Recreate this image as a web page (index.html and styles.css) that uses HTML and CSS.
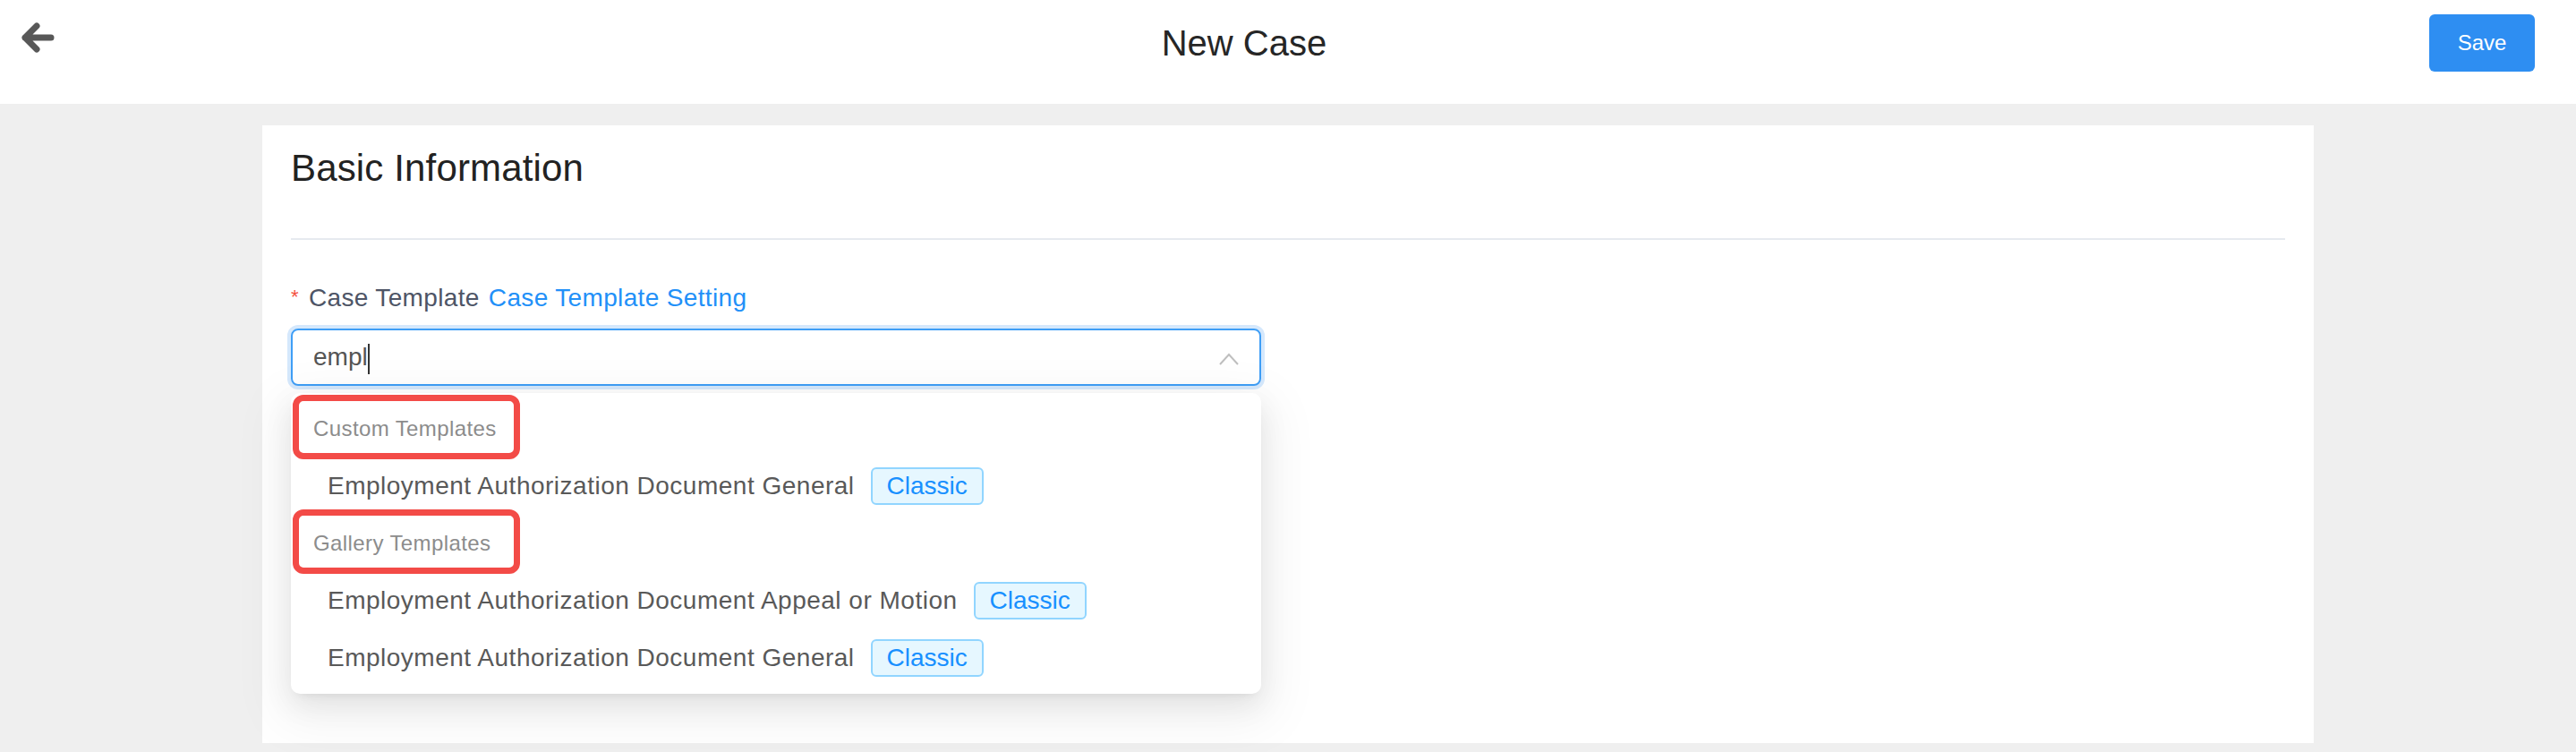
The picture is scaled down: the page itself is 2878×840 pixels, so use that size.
FILE: index.html
```html
<!DOCTYPE html>
<html lang="en">
  <head>
    <meta charset="UTF-8" />
    <meta name="viewport" content="width=device-width, initial-scale=1.0" />
    <title>New Case</title>
    <link rel="stylesheet" href="styles.css">
  </head>
  <body>
    <header class="topbar">
      <a class="back" href="#">
        <svg width="37" height="34" viewBox="0 0 37 34">
          <path d="M17 4 L4 17 L17 30 M4 17 H33" fill="none" stroke="#585858" stroke-width="7" stroke-linecap="round" stroke-linejoin="round" />
        </svg>
      </a>
      <h1 class="page-title">New Case</h1>
      <button class="btn-save">Save</button>
    </header>

    <main class="content">
      <section class="card">
        <h2 class="card-title">Basic Information</h2>
        <div class="divider"></div>

        <div class="form-item">
          <label class="form-label">
            <span class="required">*</span>Case Template <a class="link" href="#">Case Template Setting</a>
          </label>

          <div class="select">
            <div class="select-input">
              <span class="select-value">empl</span><span class="caret"></span>
              <svg class="chevron" width="22" height="14" viewBox="0 0 22 14">
                <path d="M1 13 L11 2 L21 13" fill="none" stroke="#bfbfbf" stroke-width="2" />
              </svg>
            </div>

            <div class="dropdown">
              <div class="group-title">Custom Templates<span class="mark"></span></div>
              <div class="option">
                Employment Authorization Document General<span class="tag">Classic</span>
              </div>
              <div class="group-title">Gallery Templates<span class="mark"></span></div>
              <div class="option">
                Employment Authorization Document Appeal or Motion<span class="tag">Classic</span>
              </div>
              <div class="option">
                Employment Authorization Document General<span class="tag">Classic</span>
              </div>
            </div>
          </div>
        </div>
      </section>
    </main>
  </body>
</html>
```

FILE: styles.css
```css
* {
  box-sizing: border-box;
}
html,
body {
  margin: 0;
  height: 100%;
}
body {
  display: flex;
  flex-direction: column;
  background-color: #efefef;
  font-family: "Liberation Sans", Arial, sans-serif;
  color: #262626;
}

/* top bar */
.topbar {
  display: flex;
  align-items: flex-start;
  height: 116px;
  padding: 16px 46px 0 24px;
  background-color: #fff;
}
.back {
  display: block;
  width: 42px;
  margin-top: 9px;
}
.back svg {
  display: block;
}
.page-title {
  flex: 1;
  margin: 8px 0 0;
  font-size: 40px;
  font-weight: normal;
  line-height: 48px;
  text-align: center;
  color: #262626;
}
.btn-save {
  width: 118px;
  height: 64px;
  border: none;
  border-radius: 6px;
  background-color: #2e8ef2;
  color: #fff;
  font-family: inherit;
  font-size: 24px;
  cursor: pointer;
}

/* page body */
.content {
  flex: 1;
  display: flex;
  padding: 24px 0 10px;
}
.card {
  width: 2292px;
  margin: 0 auto;
  padding: 16px 32px;
  background-color: #fff;
}
.card-title {
  margin: 0;
  font-size: 42px;
  font-weight: normal;
  line-height: 64px;
  letter-spacing: 0.15px;
  color: #222;
}
.divider {
  height: 2px;
  margin-top: 46px;
  background-color: #e6eaef;
}

/* form */
.form-item {
  margin-top: 42px;
  width: 1084px;
}
.form-label {
  display: block;
  font-size: 28px;
  line-height: 44px;
  letter-spacing: 0.35px;
  color: #4e5566;
}
.required {
  display: inline-block;
  margin-right: 11px;
  font-size: 22px;
  color: #f4503f;
  vertical-align: 3px;
}
.link {
  margin-left: 2px;
  color: #2290f8;
  text-decoration: none;
}

.select {
  position: relative;
  margin-top: 12px;
}
.select-input {
  position: relative;
  display: flex;
  align-items: center;
  height: 64px;
  padding: 0 23px;
  border: 2px solid #3f9ef6;
  border-radius: 8px;
  box-shadow: 0 0 0 4px #d5e8fc;
  font-size: 28px;
  color: #555;
}
.caret {
  width: 2px;
  height: 34px;
  margin-top: 4px;
  background-color: #333;
}
.chevron {
  position: absolute;
  right: 23px;
  top: 25px;
}

/* options popup */
.dropdown {
  position: absolute;
  top: calc(100% + 8px);
  left: 0;
  right: 0;
  padding: 8px 0;
  background-color: #fff;
  border-radius: 10px;
  box-shadow: 0 6px 12px -8px rgba(0, 0, 0, 0.12),
    0 12px 32px 0 rgba(0, 0, 0, 0.08), 0 18px 56px 16px rgba(0, 0, 0, 0.05);
}
.group-title {
  position: relative;
  display: flex;
  align-items: center;
  height: 64px;
  padding-left: 25px;
  font-size: 24px;
  letter-spacing: 0.4px;
  color: #8c8c8c;
}
.mark {
  position: absolute;
  left: 2px;
  top: -6px;
  bottom: -2px;
  width: 254px;
  border: 7px solid #f34b47;
  border-radius: 12px;
}
.option {
  display: flex;
  align-items: center;
  height: 64px;
  padding-left: 41px;
  font-size: 28px;
  letter-spacing: 0.5px;
  color: #595959;
}
.tag {
  height: 42px;
  margin-left: 18px;
  padding: 0 16px;
  border: 2px solid #91d5ff;
  border-radius: 6px;
  background-color: #e6f7ff;
  color: #1890ff;
  font-size: 28px;
  line-height: 38px;
  letter-spacing: 0;
}
```
